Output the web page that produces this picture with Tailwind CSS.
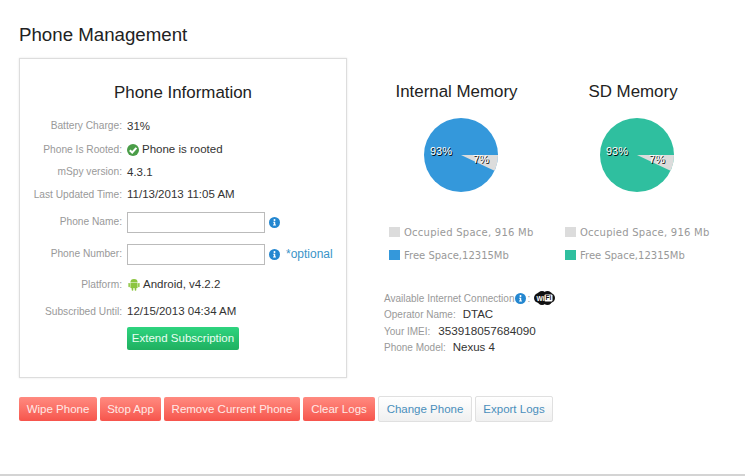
<!DOCTYPE html>
<html lang="en">
<head>
    <meta charset="UTF-8">
    <title>Phone Management</title>
    <script src="https://cdn.jsdelivr.net/npm/@tailwindcss/browser@4"></script>
</head>
<body class="bg-white font-['Liberation_Sans',Arial,sans-serif] text-[#333] overflow-hidden">
    <div class="relative flex flex-col h-[476px] w-[745px] border-b-[2px] border-[#d4d4d4] pl-[19px] pt-[24px]">
        <h1 class="text-[18.7px] leading-[22px] text-[#222] mb-[12px]">Phone Management</h1>
        <div class="flex">
            <!-- phone information -->
            <div class="w-[328px] h-[320px] border border-[#ddd] shadow-[0_0_2px_#e5e5e5] pt-[24px]">
                <h2 class="text-[16.9px] leading-[20px] text-[#222] text-center mb-[13px]">Phone Information</h2>
                <div class="grid grid-cols-[102px_1fr] gap-x-[5px] text-[11.5px] items-center">
                    <span class="h-[22px] leading-[20px] text-right text-[10.2px] text-[#999]">Battery Charge:</span>
                    <span class="h-[22px] leading-[20px] text-[#333]">31%</span>

                    <span class="h-[23px] leading-[23px] text-right text-[10.2px] text-[#999]">Phone Is Rooted:</span>
                    <span class="h-[23px] flex items-center gap-[3px] text-[#333]">
                        <svg class="w-[12px] h-[12px]" viewBox="0 0 12 12"><circle cx="6" cy="6" r="6" fill="#4a9d48"/><path d="M2.8 6.2l2.4 2.3L9.4 3.9" fill="none" stroke="#fff" stroke-width="2.1"/></svg>
                        Phone is rooted
                    </span>

                    <span class="h-[22px] leading-[22px] text-right text-[10.2px] text-[#999]">mSpy version:</span>
                    <span class="h-[22px] leading-[22px] text-[#333]">4.3.1</span>

                    <span class="h-[23px] leading-[23px] text-right text-[10.2px] text-[#999]">Last Updated Time:</span>
                    <span class="h-[23px] leading-[23px] text-[#333]">11/13/2013 11:05 AM</span>

                    <span class="h-[32px] leading-[32px] text-right text-[10.2px] text-[#999]">Phone Name:</span>
                    <span class="h-[32px] flex items-center gap-[4px]">
                        <input type="text" class="w-[138px] h-[21px] border border-[#bbb] bg-white">
                        <svg class="w-[11px] h-[11px] mt-[1px]" viewBox="0 0 12 12"><circle cx="6" cy="6" r="6" fill="#2487d0"/><circle cx="6" cy="3.4" r="1.1" fill="#fff"/><path d="M4.6 5.3h2.2v3h.8v1H4.4v-1h.9v-2h-.7z" fill="#fff"/></svg>
                    </span>

                    <span class="h-[32px] leading-[32px] text-right text-[10.2px] text-[#999]">Phone Number:</span>
                    <span class="h-[32px] flex items-center gap-[4px]">
                        <input type="text" class="w-[138px] h-[21px] border border-[#bbb] bg-white">
                        <svg class="w-[11px] h-[11px] mt-[1px]" viewBox="0 0 12 12"><circle cx="6" cy="6" r="6" fill="#2487d0"/><circle cx="6" cy="3.4" r="1.1" fill="#fff"/><path d="M4.6 5.3h2.2v3h.8v1H4.4v-1h.9v-2h-.7z" fill="#fff"/></svg>
                        <span class="ml-[2px] text-[12px] text-[#3a94c8]">*optional</span>
                    </span>

                    <span class="h-[29px] leading-[29px] text-right text-[10.2px] text-[#999]">Platform:</span>
                    <span class="h-[29px] flex items-center gap-[4px] text-[#333]">
                        <svg class="w-[12px] h-[13px] ml-[1px] mr-[-1px]" viewBox="0 0 12 13" fill="#8cc540"><path d="M2.4 4.4a3.6 3.4 0 0 1 7.2 0z"/><rect x="2.4" y="4.9" width="7.2" height="5.2" rx=".6"/><rect x="0.4" y="4.9" width="1.5" height="4.4" rx=".7"/><rect x="10.1" y="4.9" width="1.5" height="4.4" rx=".7"/><rect x="3.7" y="9.5" width="1.6" height="3.3" rx=".7"/><rect x="6.7" y="9.5" width="1.6" height="3.3" rx=".7"/></svg>
                        Android, v4.2.2
                    </span>

                    <span class="h-[25px] leading-[25px] text-right text-[10.2px] text-[#999]">Subscribed Until:</span>
                    <span class="h-[25px] leading-[25px] text-[#333]">12/15/2013 04:34 AM</span>

                    <span></span>
                    <button class="w-[112px] h-[23px] mt-[3px] rounded-[2px] bg-gradient-to-b from-[#2ed47f] to-[#1fb060] text-[#e8fff2] text-[11.5px]">Extend Subscription</button>
                </div>
            </div>

            <!-- memory -->
            <div class="ml-[42px] pt-[24px]">
                <div class="flex">
                    <div class="w-[176px]">
                        <h2 class="w-[135px] text-center text-[16.9px] leading-[20px] text-[#222] mb-[16px]">Internal Memory</h2>
                        <div class="relative w-[74px] h-[74px] ml-[35px]">
                            <svg class="w-[74px] h-[74px]" viewBox="0 0 74 74"><circle cx="37" cy="37" r="37" fill="#3498db"/><path d="M37 37L74 37A37 37 0 0 1 70.5 52.8z" fill="#dcdcdc"/></svg>
                            <span class="absolute left-[6px] top-[27px] text-[11px] leading-[13px] text-white [text-shadow:1px_1px_0_#000]">93%</span>
                            <span class="absolute left-[49px] top-[35px] text-[11px] leading-[13px] text-white [text-shadow:1px_1px_0_#000]">7%</span>
                        </div>
                        <div class="mt-[33px] font-['DejaVu_Sans',sans-serif] text-[#999]">
                            <div class="flex items-center gap-[4px] h-[14px] mb-[9px]"><span class="w-[11px] h-[10px] bg-[#dcdcdc]"></span><span class="text-[10px] tracking-[0.25px]">Occupied Space, 916 Mb</span></div>
                            <div class="flex items-center gap-[4px] h-[14px]"><span class="w-[11px] h-[10px] bg-[#3498db]"></span><span class="text-[10px]">Free Space,12315Mb</span></div>
                        </div>
                    </div>
                    <div class="w-[176px]">
                        <h2 class="w-[136px] text-center text-[16.9px] leading-[20px] text-[#222] mb-[16px]">SD Memory</h2>
                        <div class="relative w-[74px] h-[74px] ml-[35px]">
                            <svg class="w-[74px] h-[74px]" viewBox="0 0 74 74"><circle cx="37" cy="37" r="37" fill="#2fbf9f"/><path d="M37 37L74 37A37 37 0 0 1 70.5 52.8z" fill="#dcdcdc"/></svg>
                            <span class="absolute left-[6px] top-[27px] text-[11px] leading-[13px] text-white [text-shadow:1px_1px_0_#000]">93%</span>
                            <span class="absolute left-[49px] top-[35px] text-[11px] leading-[13px] text-white [text-shadow:1px_1px_0_#000]">7%</span>
                        </div>
                        <div class="mt-[33px] font-['DejaVu_Sans',sans-serif] text-[#999]">
                            <div class="flex items-center gap-[4px] h-[14px] mb-[9px]"><span class="w-[11px] h-[10px] bg-[#dcdcdc]"></span><span class="text-[10px] tracking-[0.25px]">Occupied Space, 916 Mb</span></div>
                            <div class="flex items-center gap-[4px] h-[14px]"><span class="w-[11px] h-[10px] bg-[#2fbf9f]"></span><span class="text-[10px]">Free Space,12315Mb</span></div>
                        </div>
                    </div>
                </div>

                <div class="mt-[28px] -ml-[5px] text-[10px] text-[#999]">
                    <div class="flex items-center h-[16.5px]">
                        <span>Available Internet Connection</span>
                        <svg class="w-[11px] h-[11px] ml-[1px]" viewBox="0 0 12 12"><circle cx="6" cy="6" r="6" fill="#2487d0"/><circle cx="6" cy="3.4" r="1.1" fill="#fff"/><path d="M4.6 5.3h2.2v3h.8v1H4.4v-1h.9v-2h-.7z" fill="#fff"/></svg>
                        <span class="ml-[1px]">:</span>
                        <svg class="w-[21px] h-[14px] ml-[4px]" viewBox="0 0 21 14" fill="#111">
                            <circle cx="5" cy="7" r="5"/><circle cx="16" cy="7" r="5"/><circle cx="8" cy="4.5" r="4.5"/><circle cx="13.5" cy="4.5" r="4.5"/><circle cx="8" cy="9.5" r="4.5"/><circle cx="13.5" cy="9.5" r="4.5"/>
                            <text x="2.5" y="9.5" font-size="6.5" font-weight="700" fill="#fff">Wi</text>
                            <rect x="10.5" y="3.6" width="8" height="6.8" rx="1" fill="#fff"/>
                            <text x="11.5" y="9.2" font-size="6.5" font-weight="700" fill="#111">Fi</text>
                        </svg>
                    </div>
                    <div class="flex items-center h-[16.5px] gap-[7px]"><span>Operator Name:</span><span class="text-[11.5px] text-[#333]">DTAC</span></div>
                    <div class="flex items-center h-[16.5px] gap-[8px]"><span>Your IMEI:</span><span class="text-[11.7px] text-[#333]">353918057684090</span></div>
                    <div class="flex items-center h-[16.5px] gap-[7px]"><span>Phone Model:</span><span class="text-[11.5px] text-[#333]">Nexus 4</span></div>
                </div>
            </div>
        </div>

        <!-- actions -->
        <div class="flex items-center gap-[3px] mt-[18px] text-[11.5px]">
            <button class="w-[78px] h-[24px] pt-px rounded-[2px] bg-gradient-to-b from-[#ff8a80] to-[#f6544c] text-[#ffe9e6]">Wipe Phone</button>
            <button class="w-[61px] h-[24px] pt-px rounded-[2px] bg-gradient-to-b from-[#ff8a80] to-[#f6544c] text-[#ffe9e6]">Stop App</button>
            <button class="w-[136px] h-[24px] pt-px rounded-[2px] bg-gradient-to-b from-[#ff8a80] to-[#f6544c] text-[#ffe9e6]">Remove Current Phone</button>
            <button class="w-[72px] h-[24px] pt-px rounded-[2px] bg-gradient-to-b from-[#ff8a80] to-[#f6544c] text-[#ffe9e6]">Clear Logs</button>
            <button class="w-[94px] h-[26px] pt-px rounded-[2px] border border-[#e0e0e0] bg-gradient-to-b from-white to-[#f0f0f0] text-[#4a8fbc]">Change Phone</button>
            <button class="w-[78px] h-[26px] pt-px rounded-[2px] border border-[#e0e0e0] bg-gradient-to-b from-white to-[#f0f0f0] text-[#4a8fbc]">Export Logs</button>
        </div>
    </div>
</body>
</html>
